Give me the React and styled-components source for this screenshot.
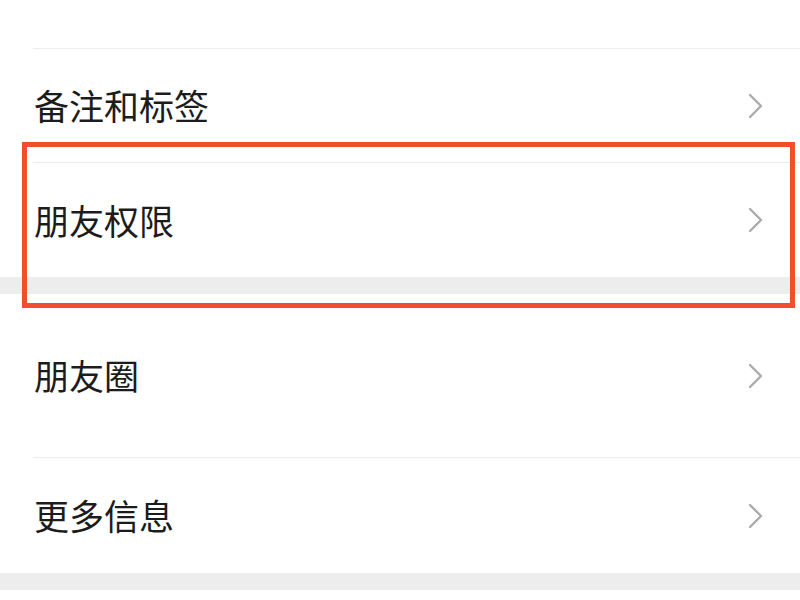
import React from 'react'
import styled, { createGlobalStyle } from 'styled-components'

const GlobalStyle = createGlobalStyle`
  html, body {
    margin: 0;
    padding: 0;
    background: #ffffff;
  }
  body {
    font-family: "Noto Sans CJK SC", "Noto Sans", sans-serif;
  }
`

const items = [
  { group: 0, label: null, height: 48 },
  { group: 0, label: '备注和标签', height: 114, divider: true },
  { group: 0, label: '朋友权限', height: 115, divider: true },
  { group: 1, label: '朋友圈', height: 163 },
  { group: 1, label: '更多信息', height: 116, divider: true },
]

export default function App() {
  const groups = [0, 1].map(g => items.filter(i => i.group === g))
  return (
    <Page>
      <GlobalStyle />
      {groups.map((rows, gi) => (
        <React.Fragment key={gi}>
          <Group>
            {rows.map((row, ri) => (
              <Row key={ri}>
                <RowInner $h={row.height} $divider={row.divider}>
                  {row.label && <Label>{row.label}</Label>}
                  {row.label && <Chevron />}
                </RowInner>
              </Row>
            ))}
          </Group>
          <Band />
        </React.Fragment>
      ))}
      <Highlight />
    </Page>
  )
}

function Chevron() {
  return (
    <svg width="15" height="26" viewBox="0 0 15 26" fill="none">
      <path d="M2 2 L13 13 L2 24" stroke="#ababab" strokeWidth="2.4" strokeLinecap="round" strokeLinejoin="round" />
    </svg>
  )
}

const Page = styled.div`
  position: relative;
  width: 800px;
  height: 600px;
  overflow: hidden;
  background: #ffffff;
`

const Group = styled.div`
  display: flex;
  flex-direction: column;
  background: #ffffff;
`

const Row = styled.div`
  padding-left: 33px;
`

const RowInner = styled.div`
  box-sizing: border-box;
  height: ${p => p.$h}px;
  display: flex;
  align-items: center;
  justify-content: space-between;
  padding-right: 37px;
  border-top: ${p => (p.$divider ? '1px solid #ececec' : 'none')};
`

const Label = styled.span`
  font-size: 35px;
  color: #1c1c1c;
  padding-left: 1px;
  margin-top: -2px;
  line-height: 1;
`

const Band = styled.div`
  height: 17px;
  background: #ededed;
`

const Highlight = styled.div`
  position: absolute;
  left: 22px;
  top: 142px;
  width: 773px;
  height: 166px;
  box-sizing: border-box;
  border: 5px solid #ef4f2f;
`
